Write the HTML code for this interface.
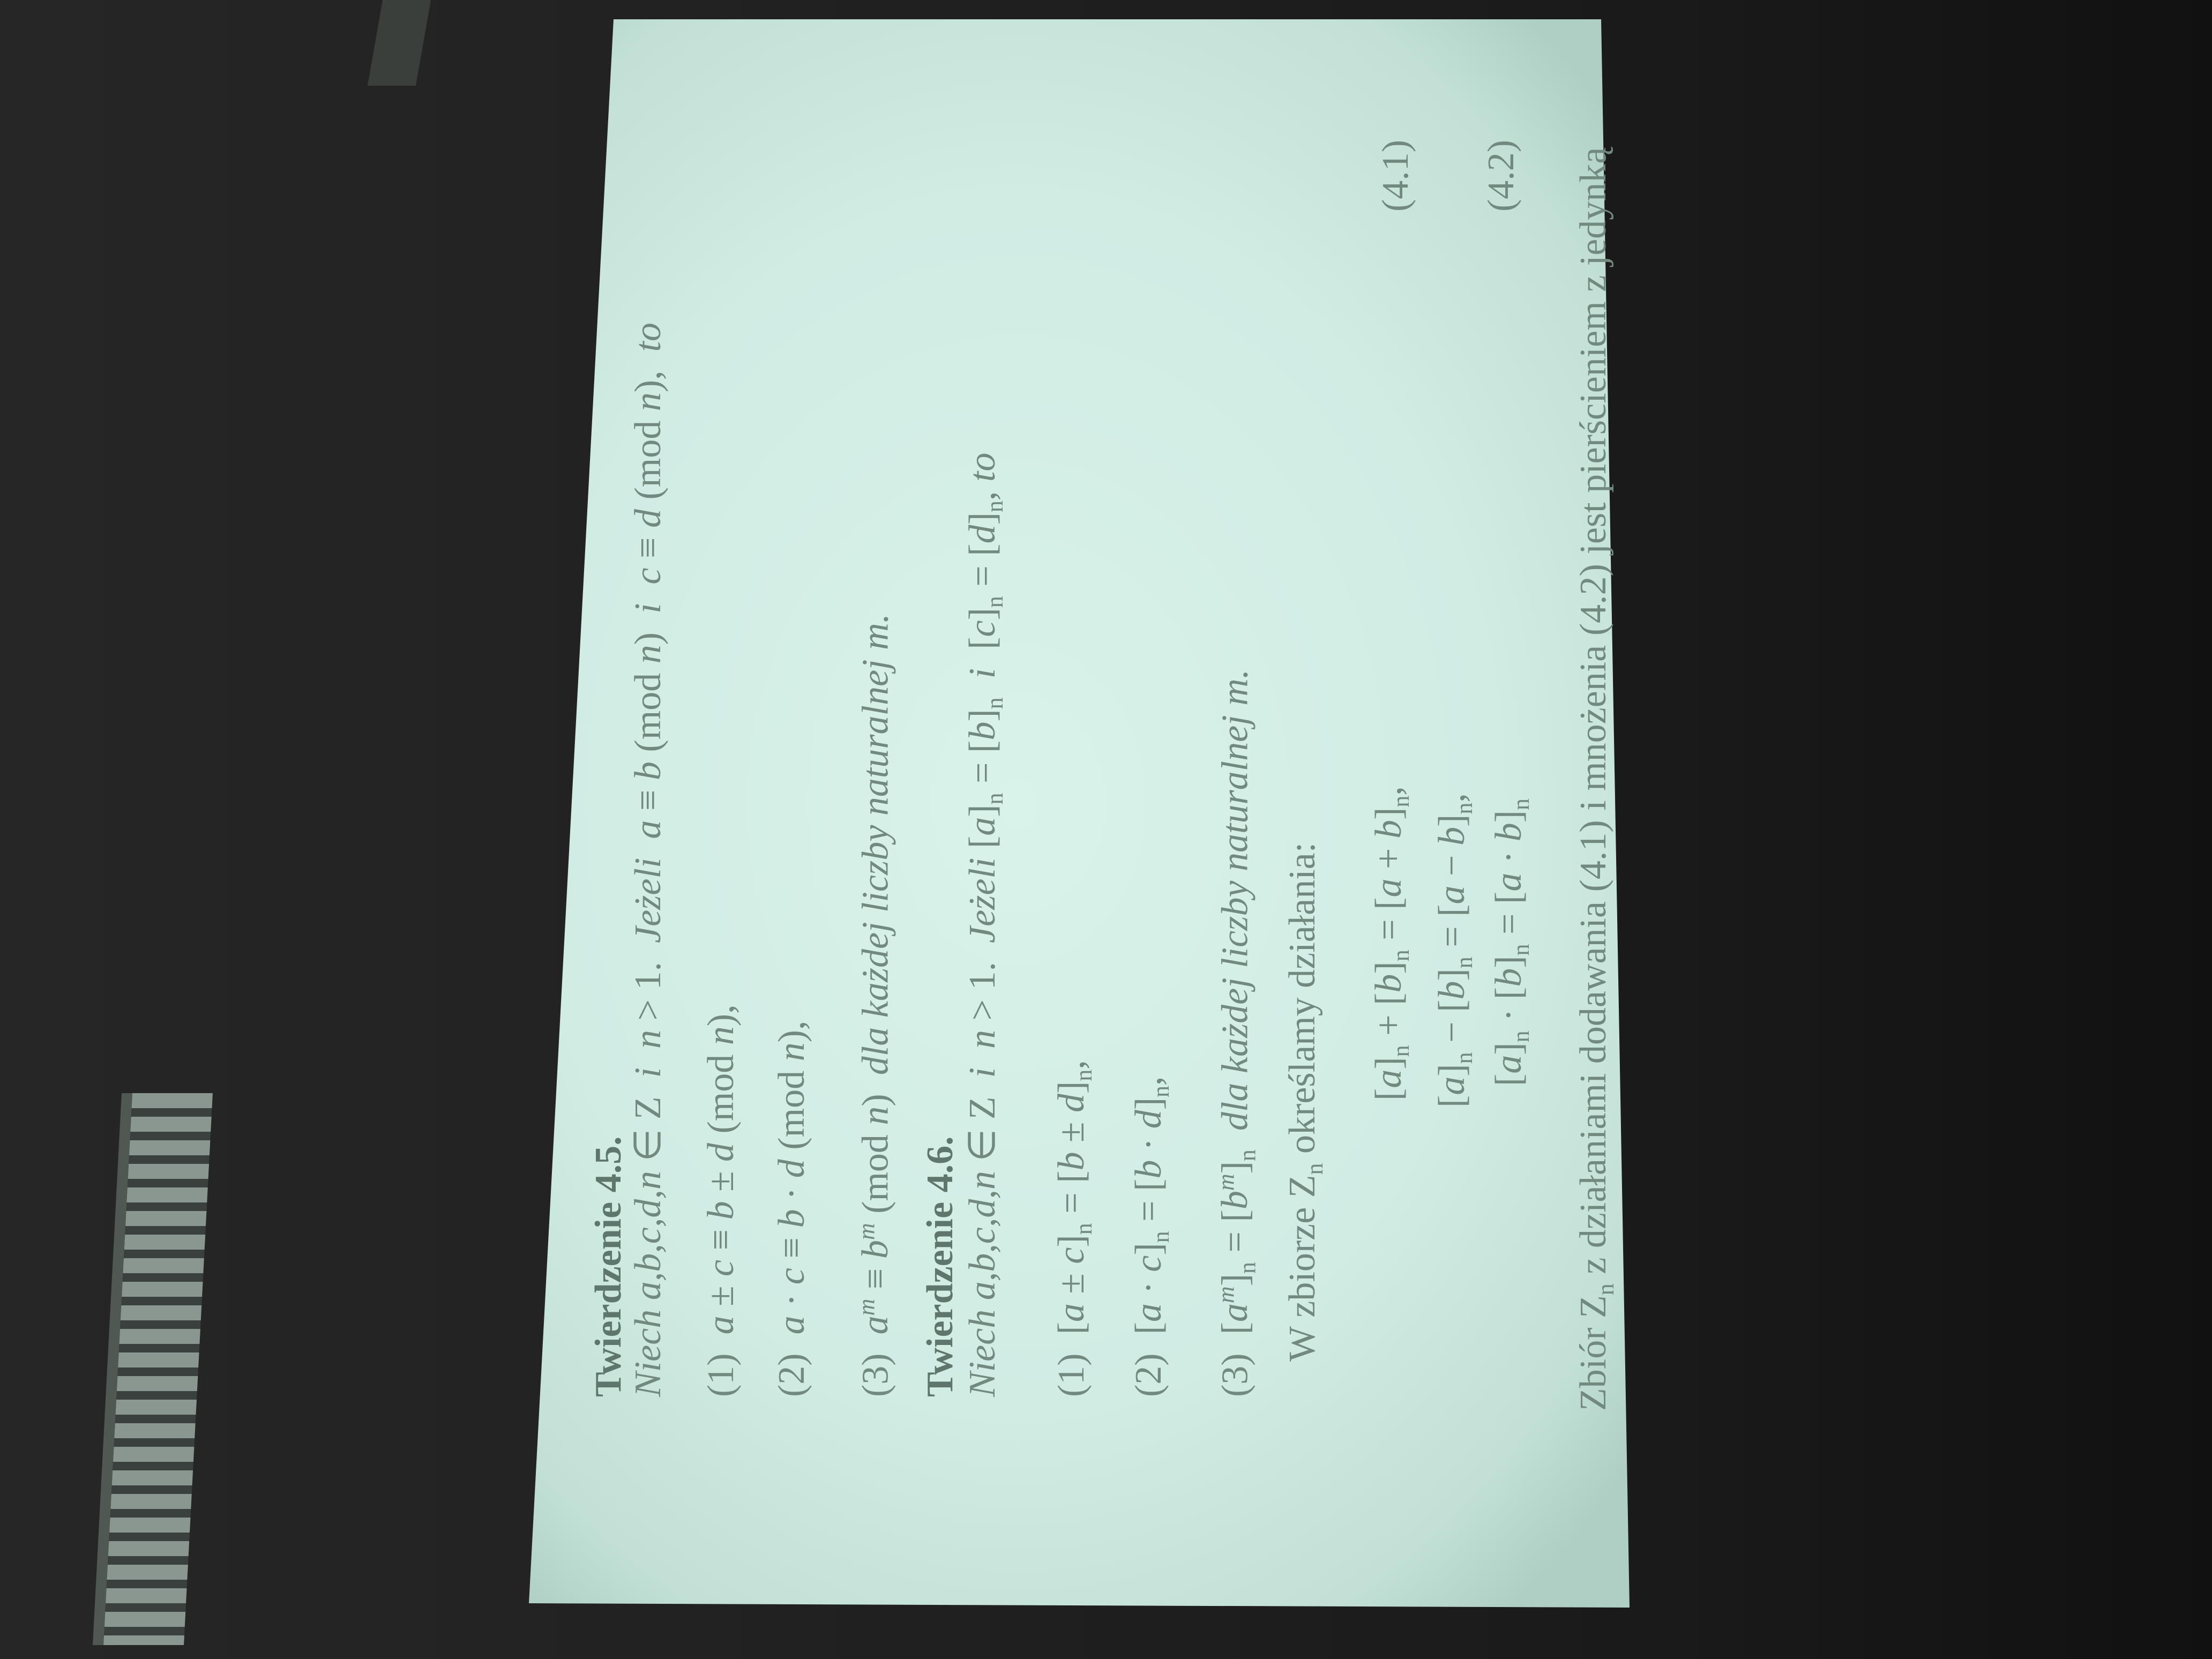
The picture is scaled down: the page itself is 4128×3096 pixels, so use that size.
<!DOCTYPE html>
<html><head><meta charset="utf-8"><style>
html,body{margin:0;padding:0;}
body{width:4128px;height:3096px;position:relative;overflow:hidden;background:linear-gradient(90deg,#262626 0%,#222 30%,#1a1a1a 75%,#111 100%);font-family:"Liberation Serif",serif;}
.screen{position:absolute;left:0;top:0;width:4128px;height:3096px;clip-path:polygon(1145px 36px,2988px 36px,3041px 3000px,987px 2992px);background:radial-gradient(ellipse 1500px 1900px at 1900px 1500px,#d9f2ea 0%,#d0ece3 60%,#c2e0d6 88%,#b0cfc4 100%);}
.l{position:absolute;transform-origin:0 0;transform:rotate(-90deg);white-space:nowrap;color:#72897f;font-size:70px;line-height:80px;}
.b{font-weight:bold;color:#5e766c;}
i{font-style:italic;}
sub{font-size:44px;}
sup{font-size:44px;}
.dev{position:absolute;left:200px;top:2040px;width:150px;height:1030px;background:repeating-linear-gradient(180deg,#8a9690 0 28px,#3a403d 28px 44px);transform:skewX(-3deg);border-left:20px solid #505854;}
.top{position:absolute;left:700px;top:0;width:90px;height:160px;background:#3a3f3c;transform:skewX(-10deg);}
</style></head><body>
<div class="top"></div>
<div class="dev"></div>
<div class="screen"></div>
<div class="l b" style="left:1096px;top:2607px">Twierdzenie 4.5.</div>
<div class="l" style="left:1170px;top:2607px"><i>Niech</i> <i>a,b,c,d,n</i> ∈ Z &nbsp;<i>i</i>&nbsp; <i>n</i> &gt; 1. &nbsp;<i>Jeżeli</i> &nbsp;<i>a</i> ≡ <i>b</i> (mod <i>n</i>) &nbsp;<i>i</i>&nbsp; <i>c</i> ≡ <i>d</i> (mod <i>n</i>), &nbsp;<i>to</i></div>
<div class="l" style="left:1306px;top:2607px">(1) &nbsp;<i>a</i> ± <i>c</i> ≡ <i>b</i> ± <i>d</i> (mod <i>n</i>),</div>
<div class="l" style="left:1438px;top:2607px">(2) &nbsp;<i>a</i> · <i>c</i> ≡ <i>b</i> · <i>d</i> (mod <i>n</i>),</div>
<div class="l" style="left:1578px;top:2607px">(3) &nbsp;<i>a<sup>m</sup></i> ≡ <i>b<sup>m</sup></i> (mod <i>n</i>) &nbsp;<i>dla każdej liczby naturalnej m.</i></div>
<div class="l b" style="left:1715px;top:2607px">Twierdzenie 4.6.</div>
<div class="l" style="left:1794px;top:2607px"><i>Niech</i> <i>a,b,c,d,n</i> ∈ Z &nbsp;<i>i</i>&nbsp; <i>n</i> &gt; 1. &nbsp;<i>Jeżeli</i> [<i>a</i>]<sub>n</sub> = [<i>b</i>]<sub>n</sub> &nbsp;<i>i</i>&nbsp; [<i>c</i>]<sub>n</sub> = [<i>d</i>]<sub>n</sub>, <i>to</i></div>
<div class="l" style="left:1960px;top:2607px">(1) &nbsp;[<i>a</i> ± <i>c</i>]<sub>n</sub> = [<i>b</i> ± <i>d</i>]<sub>n</sub>,</div>
<div class="l" style="left:2104px;top:2607px">(2) &nbsp;[<i>a</i> · <i>c</i>]<sub>n</sub> = [<i>b</i> · <i>d</i>]<sub>n</sub>,</div>
<div class="l" style="left:2249px;top:2607px">(3) &nbsp;[<i>a<sup>m</sup></i>]<sub>n</sub> = [<i>b<sup>m</sup></i>]<sub>n</sub> &nbsp;<i>dla każdej liczby naturalnej m.</i></div>
<div class="l" style="left:2391px;top:2541px">W zbiorze Z<sub>n</sub> określamy działania:</div>
<div class="l" style="left:2552px;top:2054px">[<i>a</i>]<sub>n</sub> + [<i>b</i>]<sub>n</sub> = [<i>a</i> + <i>b</i>]<sub>n</sub>,</div>
<div class="l" style="left:2670px;top:2067px">[<i>a</i>]<sub>n</sub> − [<i>b</i>]<sub>n</sub> = [<i>a</i> − <i>b</i>]<sub>n</sub>,</div>
<div class="l" style="left:2776px;top:2027px">[<i>a</i>]<sub>n</sub> · [<i>b</i>]<sub>n</sub> = [<i>a</i> · <i>b</i>]<sub>n</sub></div>
<div class="l" style="left:2565px;top:395px">(4.1)</div>
<div class="l" style="left:2762px;top:395px">(4.2)</div>
<div class="l" style="left:2934px;top:2633px">Zbiór Z<sub>n</sub> z działaniami dodawania (4.1) i mnożenia (4.2) jest pierścieniem z jedynką</div>
</body></html>
